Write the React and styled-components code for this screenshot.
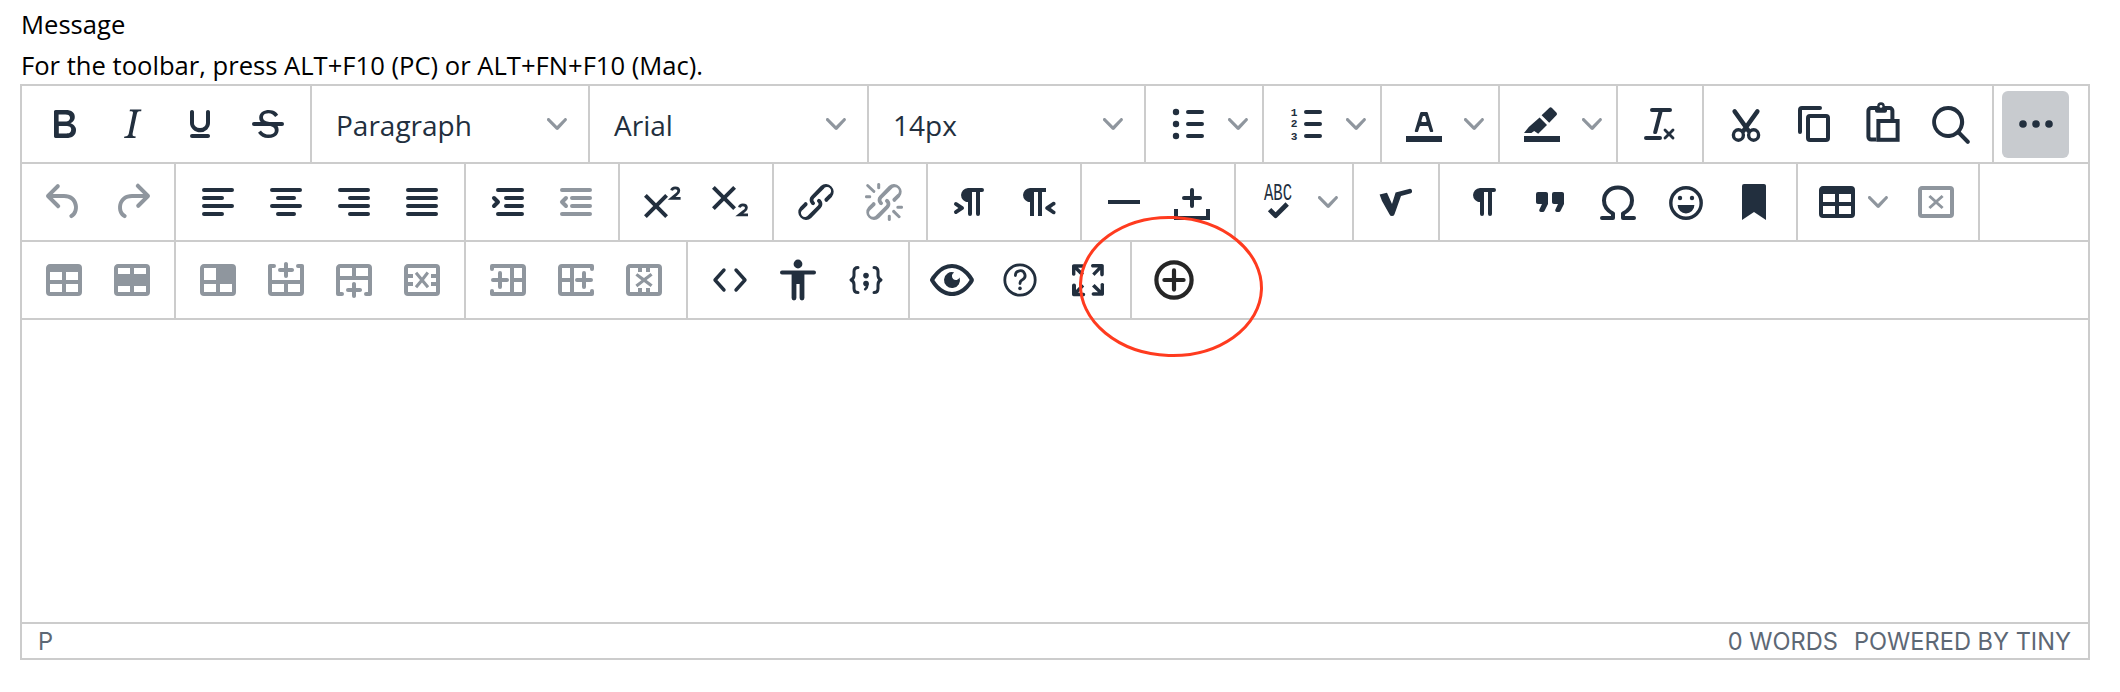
import React from 'react';
import styled, { createGlobalStyle } from 'styled-components';

const Global = createGlobalStyle`
  html, body { margin: 0; padding: 0; background: #fff; }
  body { font-family: "Open Sans", "Noto Sans", sans-serif; color: #000; }
`;

const DARK = '#222f3e';
const GRAY = '#8f969e';
const LINE = '#cccccc';

const Page = styled.div`
  position: relative;
  width: 2120px;
  height: 692px;
  padding: 4px 30px 0 20px;
  box-sizing: border-box;
  overflow: hidden;
`;
const Label = styled.div`
  font-size: 25.6px;
  line-height: 42px;
  padding-left: 1px;
`;
const Hint = styled.div`
  font-size: 25.6px;
  line-height: 36px;
  margin-top: 2px;
  padding-left: 1px;
`;
const Editor = styled.div`
  width: 2070px;
  height: 576px;
  box-sizing: border-box;
  border: 2px solid ${LINE};
  display: flex;
  flex-direction: column;
`;
const Row = styled.div`
  display: flex;
  height: 78px;
  flex: none;
  box-sizing: border-box;
  border-bottom: 2px solid ${LINE};
`;
const Group = styled.div`
  display: flex;
  align-items: center;
  box-sizing: border-box;
  padding: 0 8px;
  flex: none;
  border-right: 2px solid ${LINE};
`;
const EndGroup = styled(Group)`
  flex: 1;
  border-right: 0;
`;
const Btn = styled.div`
  width: ${p => p.$w || 68}px;
  height: 67px;
  flex: none;
  display: flex;
  align-items: center;
  justify-content: center;
  border-radius: 6px;
  color: ${p => (p.$off ? GRAY : p.$ink || DARK)};
  background: ${p => (p.$active ? '#c8cbcf' : 'transparent')};
`;
const Split = styled.div`
  display: flex;
  align-items: center;
  flex: none;
  width: ${p => (p.$compact ? 96 : 100)}px;
`;
const Caret = styled.div`
  width: ${p => (p.$compact ? 34 : 32)}px;
  flex: none;
  display: flex;
  justify-content: ${p => (p.$compact ? 'flex-start' : 'center')};
`;
const Select = styled.div`
  box-sizing: border-box;
  flex: none;
  width: ${p => p.$w}px;
  display: flex;
  align-items: center;
  justify-content: space-between;
  padding: 0 21px 0 24px;
  border-right: 2px solid ${LINE};
  font-size: 28px;
  color: ${DARK};
`;
const SelectText = styled.span`
  padding-top: 2px;
`;
const Body = styled.div`
  flex: 1;
`;
const Status = styled.div`
  flex: none;
  height: 36px;
  box-sizing: border-box;
  border-top: 2px solid ${LINE};
  display: flex;
  align-items: center;
  justify-content: space-between;
  padding: 0 17px 0 16px;
  font-family: Inter, "Liberation Sans", sans-serif;
  font-size: 23.6px;
  color: #5d6875;
`;
const StatusRight = styled.div`
  display: flex;
  gap: 16px;
`;
const Svg = styled.svg`
  display: block;
  flex: none;
  fill: currentColor;
`;
const Mark = styled.svg`
  position: absolute;
  left: 1070px;
  top: 205px;
  width: 205px;
  height: 165px;
  pointer-events: none;
`;

const Chevron = () => (
  <Svg width="20" height="20" viewBox="0 0 10 10" style={{ color: GRAY }}>
    <path d="M8.7 2.2c.3-.3.8-.3 1 0 .4.4.4.9 0 1.2L5.7 7.8c-.3.3-.9.3-1.2 0L.2 3.4a.8.8 0 0 1 0-1.2c.3-.3.8-.3 1.1 0L5 6l3.7-3.8z" />
  </Svg>
);

const s = { fill: 'none', stroke: 'currentColor', strokeWidth: 2, strokeLinecap: 'round', strokeLinejoin: 'round' };
const P = ({ d }) => <path fillRule="evenodd" d={d} />;
const L = ({ d, w }) => <path {...s} strokeWidth={w || 2} d={d} />;

const pilcrow = 'M11 5h7a1 1 0 0 1 0 2h-1v11a1 1 0 0 1-2 0V7h-2v11a1 1 0 0 1-2 0v-6c-.5 0-1 0-1.4-.3A3.4 3.4 0 0 1 7.8 10a3.3 3.3 0 0 1 0-2.8 3.4 3.4 0 0 1 1.8-1.8L11 5z';
const tableFrame = 'M19 4a2 2 0 0 1 2 2v12a2 2 0 0 1-2 2H5a2 2 0 0 1-2-2V6c0-1.1.9-2 2-2h14z';
const digit = { textAnchor: 'middle', fontFamily: 'Liberation Mono', fontWeight: 700, fontSize: 5.6 };

const icons = {
  bold: <P d="M7.8 19c-.3 0-.5 0-.6-.2l-.2-.5V5.7c0-.2 0-.4.2-.5l.6-.2h5c1.5 0 2.7.3 3.5 1 .7.6 1.1 1.4 1.1 2.5a3 3 0 0 1-.6 1.9c-.4.6-1 1-1.6 1.2.4.1.9.3 1.3.6s.8.7 1 1.2c.4.4.5 1 .5 1.6 0 1.3-.4 2.3-1.3 3-.8.7-2.1 1-3.8 1H7.8zm5-8.3c.6 0 1.2-.1 1.6-.5.4-.3.6-.7.6-1.3 0-1.1-.8-1.7-2.3-1.7H9.3v3.5h3.4zm.5 6c.7 0 1.3-.1 1.7-.4.4-.4.6-.9.6-1.5s-.2-1-.7-1.4c-.4-.3-1-.4-2-.4H9.4v3.8h4z" />,
  italic: <P d="M16.7 4.7l-.1.9h-.3c-.6 0-1 0-1.4.3-.3.3-.4.6-.5 1.1l-2.1 9.8v.6c0 .5.4.8 1.4.8h.2l-.2.8H8l.2-.8h.2c1.1 0 1.8-.5 2-1.5l2-9.8.1-.5c0-.6-.4-.8-1.4-.8h-.3l.2-.9h5.8z" />,
  underline: <P d="M16 5c.6 0 1 .4 1 1v5.5a4 4 0 0 1-.4 1.8l-1 1.4a5.3 5.3 0 0 1-5.5 1 5 5 0 0 1-1.6-1c-.5-.4-.8-.9-1.1-1.4a4 4 0 0 1-.4-1.8V6c0-.6.4-1 1-1s1 .4 1 1v5.5c0 .3 0 .6.2 1l.6.7a3.3 3.3 0 0 0 2.2.8 3.4 3.4 0 0 0 2.2-.8c.3-.2.4-.5.6-.8l.2-.9V6c0-.6.4-1 1-1zM8 17h8c.6 0 1 .4 1 1s-.4 1-1 1H8a1 1 0 0 1 0-2z" />,
  strike: <><path d="M15.6 8.5c-.5-.7-1-1.1-1.3-1.3-.6-.4-1.3-.6-2-.6-2.7 0-2.8 1.7-2.8 2.1 0 1.6 1.8 2 3.2 2.3 4.4.9 4.6 2.8 4.6 3.9 0 1.4-.7 4.1-5 4.1A6.2 6.2 0 0 1 7 16.4l1.5-1.1c.4.6 1.6 2 3.7 2 1.6 0 2.5-.4 3-1.2.4-.8.3-2-.8-2.6-.7-.4-1.6-.7-2.9-1-1-.2-3.9-.8-3.9-3.6C7.6 6 10.3 5 12.4 5c2.9 0 4.2 1.6 4.7 2.4l-1.5 1.1z" /><path d="M5 11h14a1 1 0 0 1 0 2H5a1 1 0 0 1 0-2z" /></>,
  bullist: <><L d="M12 6h7M12 12h7M12 18h7" /><circle cx="6" cy="6" r="1.6" /><circle cx="6" cy="12" r="1.6" /><circle cx="6" cy="18" r="1.6" /></>,
  numlist: (
    <>
      <L d="M12 6h7M12 12h7M12 18h7" />
      <text {...digit} x="6" y="7.9">1</text>
      <text {...digit} x="6" y="13.7">2</text>
      <text {...digit} x="6" y="19.9">3</text>
    </>
  ),
  textcolor: <><path d="M3 18h18v3H3z" /><P d="M8.7 16h-.8a.5.5 0 0 1-.5-.6l2.7-9c.1-.3.3-.4.5-.4h2.8c.2 0 .4.1.5.4l2.7 9a.5.5 0 0 1-.5.6h-.8a.5.5 0 0 1-.4-.4l-.7-2.2c0-.3-.3-.4-.5-.4h-3.4c-.2 0-.4.1-.5.4l-.7 2.2c0 .3-.2.4-.4.4zm2.6-7.6l-.6 2a.5.5 0 0 0 .5.6h1.6a.5.5 0 0 0 .5-.6l-.6-2c0-.3-.3-.4-.5-.4h-.4c-.2 0-.4.1-.5.4z" /></>,
  highlight: <><path d="M3 18h18v3H3z" /><path d="M15.6 4a1 1 0 0 1 1.4 0l2.2 2.2a1 1 0 0 1 0 1.4l-3.6 3.8-3.8-3.8z" /><path d="M10.8 8.8l3.7 3.7-4.4 4.4-2-1.4-1.4 1H3l2.4-3z" /></>,
  clear: <P d="M13.2 6a1 1 0 0 1 0 .2l-2.6 10a1 1 0 0 1-1 .8h-.2a.8.8 0 0 1-.8-1l2.6-10H8a1 1 0 1 1 0-2h9a1 1 0 0 1 0 2h-3.8zM5 18h7a1 1 0 0 1 0 2H5a1 1 0 0 1 0-2zm13 1.5L16.5 18 15 19.5a.7.7 0 0 1-1-1l1.5-1.5-1.5-1.5a.7.7 0 0 1 1-1l1.5 1.5 1.5-1.5a.7.7 0 0 1 1 1L17.5 17l1.5 1.5a.7.7 0 0 1-1 1z" />,
  cut: <><L d="M6.3 5.700L13.200 15.300M17.700 5.700L10.800 15.300" w="2.200" /><ellipse {...s} strokeWidth="1.700" cx="8.200" cy="17.500" rx="2.500" ry="2.600" /><ellipse {...s} strokeWidth="1.700" cx="15.800" cy="17.500" rx="2.500" ry="2.600" /></>,
  copy: <><L d="M5 16V5a1 1 0 0 1 1-1h9" /><rect {...s} x="9" y="8" width="10" height="12" rx="1" /></>,
  paste: <><rect {...s} x="5.2" y="4" width="12" height="15.8" rx="1.4" /><rect x="8.5" y="3" width="6" height="3.4" rx="1" /><circle cx="11.5" cy="3" r="1.9" /><circle cx="11.5" cy="3.2" r=".7" fill="#fff" /><rect x="9.2" y="9.5" width="11.6" height="11.4" fill="#fff" /><rect {...s} strokeLinejoin="miter" x="10.2" y="10.5" width="9.6" height="9.4" /></>,
  search: <P d="M16 17.3a8 8 0 1 1 1.4-1.4l4.3 4.4a1 1 0 0 1-1.4 1.4l-4.4-4.4zm-5-.3a6 6 0 1 0 0-12 6 6 0 0 0 0 12z" />,
  more: <><circle cx="5.5" cy="12" r="1.9" /><circle cx="12" cy="12" r="1.9" /><circle cx="18.5" cy="12" r="1.9" /></>,
  undo: <path d="M6.4 8H12c3.7 0 6.2 2 6.8 5.1.6 2.7-.4 5.6-2.6 6.8a1 1 0 0 1-1-1.8c1.4-.7 2.2-2.8 1.6-4.6-.4-2-1.9-3.5-4.8-3.5H6.4l3.3 3.3a1 1 0 1 1-1.4 1.4l-5-5a1 1 0 0 1 0-1.4l5-5a1 1 0 0 1 1.4 1.4L6.4 8z" />,
  redo: <path d="M17.6 10H12c-2.8 0-4.4 1.4-4.9 3.5-.4 2 .3 4 1.7 4.6a1 1 0 1 1-1 1.8c-2.2-1.2-3.2-4-2.6-6.8C6 9.9 8.4 8 12 8h5.6l-3.3-3.3a1 1 0 1 1 1.4-1.4l5 5a1 1 0 0 1 0 1.4l-5 5a1 1 0 0 1-1.4-1.4l3.3-3.3z" />,
  alignLeft: <L d="M5 6h14M5 10h9M5 14h14M5 18h9" />,
  alignCenter: <L d="M5 6h14M8 10h8M5 14h14M8 18h8" />,
  alignRight: <L d="M5 6h14M10 10h9M5 14h14M10 18h9" />,
  alignFull: <L d="M5 6h14M5 10h14M5 14h14M5 18h14" />,
  indent: <><L d="M7 6h12M11 10h8M11 14h8M7 18h12" /><L d="M5 10l2 2-2 2" /></>,
  outdent: <><L d="M5 6h14M10 10h9M10 14h9M5 18h14" /><L d="M7 10l-2 2 2 2" /></>,
  sup: <><path d="M15 9.4L10.4 14l4.6 4.6-1.4 1.4L9 15.4 4.4 20 3 18.6 7.6 14 3 9.4 4.4 8 9 12.6 13.6 8z" /><path {...s} strokeWidth="1.400" strokeLinecap="butt" strokeLinejoin="miter" d="M16.800 6.200c.2-.9.9-1.300 1.800-1.300 1.100 0 1.800.6 1.800 1.500 0 .8-.5 1.300-1.200 1.800l-2.400 2H21.300" /></>,
  sub: <><path d="M10.4 10l4.6 4.6-1.4 1.400L9 11.400 4.4 16 3 14.600 7.600 10 3 5.400 4.400 4 9 8.600 13.600 4 15 5.400 10.400 10z" /><path {...s} strokeWidth="1.400" strokeLinecap="butt" strokeLinejoin="miter" d="M16.700 14.700c.2-.9.9-1.300 1.700-1.300 1.100 0 1.800.6 1.800 1.500 0 .8-.5 1.300-1.200 1.700l-2.300 1.800H21" /></>,
  link: <path d="M6.2 12.3a1 1 0 0 1 1.4 1.4l-2 2a2 2 0 1 0 2.6 2.8l4.8-4.8a1 1 0 0 0 0-1.4 1 1 0 1 1 1.4-1.3 2.9 2.9 0 0 1 0 4L9.6 20a3.9 3.9 0 0 1-5.5-5.5l2-2zm11.6-.6a1 1 0 0 1-1.4-1.4l2-2a2 2 0 1 0-2.6-2.8L11 10.3a1 1 0 0 0 0 1.4A1 1 0 1 1 9.6 13a2.9 2.9 0 0 1 0-4L14.4 4a3.9 3.9 0 0 1 5.5 5.5l-2 2z" />,
  unlink: <path d="M6.2 12.3a1 1 0 0 1 1.4 1.4l-2.1 2a2 2 0 1 0 2.7 2.8l4.8-4.8a1 1 0 0 0 0-1.4 1 1 0 1 1 1.4-1.3 2.9 2.9 0 0 1 0 4L9.6 20a3.9 3.9 0 0 1-5.5-5.5l2-2zm11.6-.6a1 1 0 0 1-1.4-1.4l2.1-2a2 2 0 1 0-2.7-2.8L11 10.3a1 1 0 0 0 0 1.4A1 1 0 1 1 9.6 13a2.9 2.9 0 0 1 0-4L14.4 4a3.9 3.9 0 0 1 5.5 5.5l-2 2zM7.6 6.3a.8.8 0 0 1-1 1.1L3.3 4.2a.7.7 0 1 1 1-1l3.2 3.1zM5.1 8.6a.8.8 0 0 1 0 1.5H3a.8.8 0 0 1 0-1.5H5zm5-3.5a.8.8 0 0 1-1.5 0V3a.8.8 0 0 1 1.5 0v2zm6 11.8a.8.8 0 0 1 1-1l3.2 3.2a.8.8 0 0 1-1 1L16 17zm-2.2 2a.8.8 0 0 1 1.5 0V21a.8.8 0 0 1-1.5 0V19zm5-3.5a.7.7 0 1 1 0-1.5H21a.8.8 0 0 1 0 1.5h-2z" />,
  ltr: <><path d={pilcrow} /><path d="M4.4 16.2L6.2 15l-1.8-1.2a1 1 0 0 1 1.2-1.6l3 2a1 1 0 0 1 0 1.6l-3 2a1 1 0 1 1-1.2-1.6z" /></>,
  rtl: <><path d="M8 5h8v2h-2v12h-2V7h-2v12H8v-7c-.5 0-1 0-1.4-.3A3.4 3.4 0 0 1 4.8 10a3.3 3.3 0 0 1 0-2.8 3.4 3.4 0 0 1 1.8-1.8L8 5z" /><path d="M20 16.2a1 1 0 1 1-1 1.6l-3-2a1 1 0 0 1 0-1.6l3-2a1 1 0 1 1 1 1.6L18.4 15l1.6 1.2z" /></>,
  hr: <path d="M4 11h16v2H4z" />,
  nbsp: <><L d="M8 10h8M12 6v8" /><path {...s} strokeLinecap="butt" strokeLinejoin="miter" d="M4 15.500V20h16v-4.500" /></>,
  spell: (
    <>
      <text x="12" y="10.800" textAnchor="middle" fontFamily="Liberation Mono" fontSize="11.500" textLength="14" lengthAdjust="spacingAndGlyphs">ABC</text>
      <path {...s} strokeWidth="2.400" strokeLinecap="butt" d="M7.800 15.800l3 3 5.800-5.800" />
    </>
  ),
  math: <path d="M3.800 8.200L7.500 7.400 10 13l1.800-5.800 7.200-1.800a1.200 1.200 0 0 1 .5 2.200L14.500 9l-3.200 9a1.300 1.300 0 0 1-2.500.2L5 11.500z" />,
  pilcrow: <path d={pilcrow} />,
  quote: <path d="M7.5 17h.9c.4 0 .7-.2.9-.6L11 13V8c0-.6-.4-1-1-1H6a1 1 0 0 0-1 1v4c0 .6.4 1 1 1h2l-1.300 2.700a1 1 0 0 0 .8 1.300zm8 0h.9c.4 0 .7-.2.9-.6L19 13V8c0-.6-.4-1-1-1h-4a1 1 0 0 0-1 1v4c0 .6.4 1 1 1h2l-1.300 2.700a1 1 0 0 0 .8 1.300z" />,
  omega: <L d="M4 20h5.500v-2.200C6.500 16.300 5 13.700 5 11.300 5 7.500 8 4.800 12 4.800s7 2.700 7 6.500c0 2.400-1.500 5-4.500 6.500V20H20" />,
  emoji: <><circle {...s} strokeWidth="1.700" cx="12" cy="12.500" r="7.600" /><circle cx="9" cy="10" r="1.100" /><circle cx="15" cy="10" r="1.100" /><path d="M7.800 13.500h8.400a4.200 4.200 0 0 1-8.400 0z" /></>,
  bookmark: <path d="M6 4v17l6-4 6 4V4c0-.6-.4-1-1-1H7a1 1 0 0 0-1 1z" />,
  table: <P d={`${tableFrame}M5 14v4h6v-4H5zm14 0h-6v4h6v-4zm0-6h-6v4h6V8zM5 12h6V8H5v4z`} />,
  tableDelete: <><P d={`${tableFrame}M5 6v12h14V6H5z`} /><path d="M14.800 8.500l1 1L13 12l2.800 2.500-1 1L12 13l-2.800 2.500-1-1L11 12 8.200 9.500l1-1L12 11z" /></>,
  rowProps: <P d={`${tableFrame}M5 14v4h6v-4H5zm14 0h-6v4h6v-4zm0-6h-6v4h6V8zM5 12h6V8H5v4z`} />,
  midRow: <P d={`${tableFrame}M5 15v3h6v-3H5zm14 0h-6v3h6v-3zM19 6h-6v3h6V6zM5 9h6V6H5v3z`} />,
  cell: <P d={`${tableFrame}M5 14v4h6v-4H5zm14 0h-6v4h6v-4zM5 12h6V6H5v6z`} />,
  rowAbove: <P d="M6 4a1 1 0 1 1 0 2H5v6h14V6h-1a1 1 0 0 1 0-2h2c.6 0 1 .4 1 1v13a2 2 0 0 1-2 2H5a2 2 0 0 1-2-2V5c0-.6.4-1 1-1h2zm5 10H5v4h6v-4zm8 0h-6v4h6v-4zM12 3c.5 0 1 .4 1 1v2h2c.6 0 1 .4 1 1s-.4 1-1 1h-2v2c0 .6-.4 1-1 1a1 1 0 0 1-1-1V8H9a1 1 0 0 1 0-2h2V4c0-.6.4-1 1-1z" />,
  rowBelow: <path d="M12 13c.5 0 1 .4 1 1v2h2c.6 0 1 .4 1 1s-.4 1-1 1h-2v2c0 .6-.4 1-1 1a1 1 0 0 1-1-1v-2H9a1 1 0 0 1 0-2h2v-2c0-.6.4-1 1-1zm6 7a1 1 0 0 1 0-2h1v-6H5v6h1a1 1 0 0 1 0 2H4a1 1 0 0 1-1-1V6c0-1.100.9-2 2-2h14a2 2 0 0 1 2 2v13c0 .5-.4 1-1 1h-2zM11 6H5v4h6V6zm8 0h-6v4h6V6z" fillRule="evenodd" />,
  rowDelete: <P d="M19 4a2 2 0 0 1 2 2v12a2 2 0 0 1-2 2H5a2 2 0 0 1-2-2V6c0-1.100.9-2 2-2h14zm0 2H5v3h2.500v2H5v2h2.500v2H5v3h14v-3h-2.500v-2H19v-2h-2.500V9H19V6zm-4.700 1.800l1.200 1L13 12l2.600 3.100-1.200 1-2.400-2.800-2.400 2.800-1.200-1L11 12 8.400 8.900l1.200-1 2.400 2.800 2.300-2.900z" />,
  colBefore: <><path {...s} d="M4 6.500V5h15a1 1 0 0 1 1 1v12a1 1 0 0 1-1 1H4v-1.500M14 5v14M14 12h6" /><L d="M4.500 12h7M8 8.500v7" /></>,
  colAfter: <><path {...s} d="M20 6.500V5H5a1 1 0 0 0-1 1v12a1 1 0 0 0 1 1h15v-1.500M10 5v14M10 12H4" /><L d="M12.500 12h7M16 8.500v7" /></>,
  colDelete: <P d="M19 4a2 2 0 0 1 2 2v12a2 2 0 0 1-2 2H5a2 2 0 0 1-2-2V6c0-1.100.9-2 2-2h14zm-4 4h-2V6h-2v2H9V6H5v12h4v-2h2v2h2v-2h2v2h4V6h-4v2zm.3.500l1 1.200-3 2.300 3 2.300-1 1.200L12 13l-3.300 2.600-1-1.200 3-2.300-3-2.300 1-1.200L12 11l3.300-2.500z" />,
  code: <L d="M9 7l-4.500 5L9 17M15 7l4.500 5-4.500 5" w="1.700" />,
  a11y: <><circle cx="12" cy="4" r="2.200" /><path d="M4 7.200h16a1 1 0 0 1 0 2h-4.800V21a1.200 1.200 0 0 1-2.400 0v-7h-1.600v7a1.200 1.200 0 0 1-2.400 0V9.200H4a1 1 0 0 1 0-2z" /></>,
  template: <><L d="M8 5.800c-1.500 0-2 .8-2 2v1.800c0 1.200-.5 2-1.500 2.400 1 .4 1.500 1.200 1.500 2.400v1.800c0 1.200.5 2 2 2M16 5.800c1.500 0 2 .8 2 2v1.800c0 1.200.5 2 1.500 2.400-1 .4-1.500 1.200-1.500 2.400v1.800c0 1.200-.5 2-2 2" w="1.500" /><circle cx="12" cy="9.800" r="1.400" /><circle cx="12" cy="13.800" r="1.400" /><L d="M12.700 14.200c0 1-.4 1.800-1.100 2.400" w="1.300" /></>,
  preview: <P d="M3.500 12.500c.5.8 1.100 1.600 1.800 2.300 2 2 4.200 3.200 6.700 3.200s4.700-1.200 6.700-3.200a16.200 16.200 0 0 0 2.100-2.800 15.700 15.700 0 0 0-2.100-2.800c-2-2-4.200-3.200-6.700-3.200a9.300 9.300 0 0 0-6.700 3.200A16.200 16.200 0 0 0 3.200 12c0 .2.2.3.3.5zm-2.400-1l.7-1.200L4 7.800C6.200 5.400 8.900 4 12 4c3 0 5.800 1.400 8.100 3.800a18.200 18.200 0 0 1 2.800 3.700v1l-.7 1.200-2.100 2.500c-2.300 2.400-5 3.800-8.100 3.800-3 0-5.800-1.400-8.100-3.800a18.200 18.200 0 0 1-2.800-3.700 1 1 0 0 1 0-1zm12-3.300a2 2 0 1 0 2.700 2.600 4 4 0 1 1-2.700-2.600z" />,
  help: <><circle {...s} cx="12" cy="12" r="7.600" strokeWidth="1.400" /><L d="M9.700 9.800a2.400 2.400 0 1 1 3.500 2.100c-.8.4-1.200 1-1.200 1.900" w="1.400" /><circle cx="12" cy="16.200" r=".9" /></>,
  fullscreen: <path d="M15.300 10l-1.200-1.300 2.900-3h-2.300a.9.900 0 1 1 0-1.700H19c.5 0 .9.4.9.9v4.400a.9.900 0 1 1-1.800 0V7l-2.900 3zm0 4l3 3v-2.300a.9.900 0 1 1 1.700 0V19c0 .5-.4.9-.9.9h-4.400a.9.900 0 1 1 0-1.800H17l-3-2.900 1.300-1.200zM10 15.400l-2.900 3h2.300a.9.900 0 1 1 0 1.700H5a.9.900 0 0 1-1-.9v-4.400a.9.900 0 1 1 2 0V17l2.900-3 1.200 1.300zM8.700 10L5.700 7v2.300a.9.900 0 0 1-1.700 0V5c0-.5.4-.9.9-.9h4.400a.9.900 0 0 1 0 1.800H7l3 2.900-1.300 1.200z" />,
  plusCircle: <><circle {...s} cx="12" cy="12" r="8.800" strokeWidth="2.100" /><L d="M7.200 12h9.600M12 7.200v9.600" w="2.100" /></>,
};

const Icon = ({ name }) => (
  <Svg width="48" height="48" viewBox="0 0 24 24">{icons[name]}</Svg>
);
const B = ({ n, off, ink, active, w }) => (
  <Btn $off={off} $ink={ink} $active={active} $w={w}><Icon name={n} /></Btn>
);
const SplitBtn = ({ n, off, compact }) => (
  <Split $compact={compact}>
    <B n={n} off={off} w={compact ? 62 : 68} />
    <Caret $compact={compact}><Chevron /></Caret>
  </Split>
);

export default function App() {
  return (
    <Page>
      <Global />
      <Label>Message</Label>
      <Hint>For the toolbar, press ALT+F10 (PC) or ALT+FN+F10 (Mac).</Hint>
      <Editor>
        <Row>
          <Group><B n="bold" /><B n="italic" /><B n="underline" /><B n="strike" /></Group>
          <Select $w={278}><SelectText>Paragraph</SelectText><Chevron /></Select>
          <Select $w={279}><SelectText>Arial</SelectText><Chevron /></Select>
          <Select $w={277}><SelectText>14px</SelectText><Chevron /></Select>
          <Group><SplitBtn n="bullist" /></Group>
          <Group><SplitBtn n="numlist" /></Group>
          <Group><SplitBtn n="textcolor" /></Group>
          <Group><SplitBtn n="highlight" /></Group>
          <Group><B n="clear" /></Group>
          <Group><B n="cut" /><B n="copy" /><B n="paste" /><B n="search" /></Group>
          <EndGroup><B n="more" active w={67} /></EndGroup>
        </Row>
        <Row>
          <Group><B n="undo" off /><B n="redo" off /></Group>
          <Group><B n="alignLeft" /><B n="alignCenter" /><B n="alignRight" /><B n="alignFull" /></Group>
          <Group><B n="indent" /><B n="outdent" off /></Group>
          <Group><B n="sup" /><B n="sub" /></Group>
          <Group><B n="link" /><B n="unlink" off /></Group>
          <Group><B n="ltr" /><B n="rtl" /></Group>
          <Group><B n="hr" /><B n="nbsp" /></Group>
          <Group><SplitBtn n="spell" /></Group>
          <Group><B n="math" /></Group>
          <Group><B n="pilcrow" /><B n="quote" /><B n="omega" /><B n="emoji" /><B n="bookmark" /></Group>
          <Group><SplitBtn n="table" compact /><B n="tableDelete" off /></Group>
          <EndGroup />
        </Row>
        <Row>
          <Group><B n="rowProps" off /><B n="midRow" off /></Group>
          <Group><B n="cell" off /><B n="rowAbove" off /><B n="rowBelow" off /><B n="rowDelete" off /></Group>
          <Group><B n="colBefore" off /><B n="colAfter" off /><B n="colDelete" off /></Group>
          <Group><B n="code" /><B n="a11y" /><B n="template" /></Group>
          <Group><B n="preview" /><B n="help" /><B n="fullscreen" /></Group>
          <EndGroup><B n="plusCircle" ink="#262626" /></EndGroup>
        </Row>
        <Body />
        <Status>
          <span>P</span>
          <StatusRight><span>0 WORDS</span><span>POWERED BY TINY</span></StatusRight>
        </Status>
      </Editor>
      <Mark viewBox="0 0 205 165">
        <ellipse cx="101" cy="81.500" rx="90.500" ry="69" transform="rotate(2 101 81.500)" fill="none" stroke="#ff3b1f" strokeWidth="3" />
      </Mark>
    </Page>
  );
}
